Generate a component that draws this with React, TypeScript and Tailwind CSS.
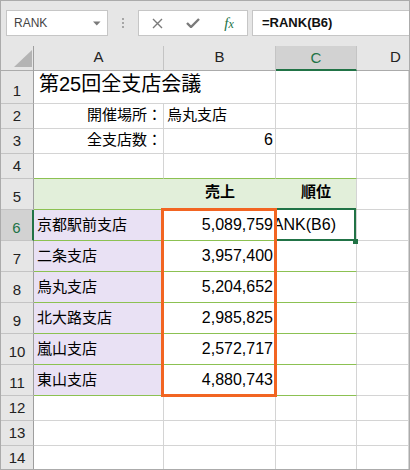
import React from "react";

const F = "font-['Liberation_Sans','Noto_Sans_CJK_JP',sans-serif]";

const G = "border-r border-b border-[#d4d4d4]";
const RH =
  "flex items-end justify-center pb-[2px] text-[15px] leading-[20px] text-[#222] bg-[#e6e6e6] border-r border-b border-r-[#9e9e9e] border-b-[#c4c4c4]";
const RH_SEL =
  "flex items-end justify-center pb-[2px] text-[15px] leading-[20px] text-[#217346] bg-[#d2d2d2] border-r-2 border-b border-r-[#217346] border-b-[#c4c4c4]";
const CH =
  "flex items-center justify-center pb-[1px] text-[15px] text-[#222] border-r border-b border-r-[#c4c4c4] border-b-[#ababab]";

const branches: [string, string][] = [
  ["京都駅前支店", "5,089,759"],
  ["二条支店", "3,957,400"],
  ["烏丸支店", "5,204,652"],
  ["北大路支店", "2,985,825"],
  ["嵐山支店", "2,572,717"],
  ["東山支店", "4,880,743"],
];

export default function App() {
  return (
    <div
      className={`relative h-[470px] w-[410px] overflow-hidden border border-[#ababab] bg-[#e6e6e6] text-black ${F}`}
    >
      {/* formula bar */}
      <div className="flex h-[45px] items-start pl-[5px] pt-[9px]">
        <div className="flex h-[26px] w-[102px] items-center justify-between border border-[#c6c6c6] bg-white pl-[7px] pr-[6px]">
          <span className="text-[12px] text-[#444]">RANK</span>
          <svg width="8" height="5" viewBox="0 0 8 5">
            <path d="M0 0.5h7.5L3.75 4.5z" fill="#7a7a7a" />
          </svg>
        </div>
        <div className="ml-[14px] mr-[14px] flex h-[26px] flex-col items-center justify-center gap-[2px]">
          <span className="h-[2px] w-[2px] bg-[#a6a6a6]" />
          <span className="h-[2px] w-[2px] bg-[#a6a6a6]" />
          <span className="h-[2px] w-[2px] bg-[#a6a6a6]" />
        </div>
        <div className="flex h-[26px] w-[110px] items-center border border-[#c6c6c6] bg-white">
          <div className="flex w-[36px] justify-center">
            <svg width="11" height="11" viewBox="0 0 11 11">
              <path d="M1 1L10 10M10 1L1 10" stroke="#7a7a7a" strokeWidth="1.4" />
            </svg>
          </div>
          <div className="flex w-[36px] justify-center">
            <svg width="14" height="10" viewBox="0 0 14 10">
              <path d="M1 5L5 9L13 1" stroke="#7a7a7a" strokeWidth="2.4" fill="none" />
            </svg>
          </div>
          <div className="flex w-[36px] justify-center">
            <span className="font-['Liberation_Serif',serif] text-[15px] italic leading-none text-[#217346]">
              f<span className="text-[12px]">x</span>
            </span>
          </div>
        </div>
        <div className="ml-[4px] flex h-[26px] flex-1 items-center border-y border-l border-[#c6c6c6] bg-white pl-[9px]">
          <span className="text-[13px] font-bold text-[#111]">=RANK(B6)</span>
        </div>
      </div>

      {/* sheet */}
      <div className="grid grid-cols-[33px_130px_112px_81px_52px] grid-rows-[25px_33px_25px_25px_25px_31px_31px_31px_31px_31px_31px_31px_25px_25px_25px] bg-white">
        {/* header row */}
        <div className="relative border-r border-b border-r-[#9e9e9e] border-b-[#ababab] bg-[#e6e6e6]">
          <svg className="absolute left-0 top-0" width="32" height="24" viewBox="0 0 32 24">
            <path d="M13 21H31V4Z" fill="#b4b4b4" />
          </svg>
        </div>
        <div className={`${CH} bg-[#e6e6e6]`}>A</div>
        <div className={`${CH} bg-[#e6e6e6]`}>B</div>
        <div className="flex items-center justify-center border-r border-b-2 border-r-[#c4c4c4] border-b-[#217346] bg-[#d2d2d2] pt-[1px] text-[15px] text-[#217346]">
          C
        </div>
        <div className="flex items-center border-b border-b-[#ababab] bg-[#e6e6e6] pb-[1px] pl-[33px] text-[15px] text-[#222]">
          D
        </div>

        {/* row 1 */}
        <div className={RH}>1</div>
        <div className="relative z-10 flex items-end whitespace-nowrap border-b border-[#d4d4d4] pb-[6px] pl-[5px] text-[20px] leading-[26px]">
          第25回全支店会議
        </div>
        <div className={G} />
        <div className={G} />
        <div className={G} />

        {/* row 2 */}
        <div className={RH}>2</div>
        <div className={`${G} flex items-end justify-end pb-[3px] pr-[1px] text-[15px] leading-[20px]`}>
          開催場所：
        </div>
        <div className={`${G} flex items-end pb-[3px] pl-[3px] text-[15px] leading-[20px]`}>烏丸支店</div>
        <div className={G} />
        <div className={G} />

        {/* row 3 */}
        <div className={RH}>3</div>
        <div className={`${G} flex items-end justify-end pb-[3px] pr-[1px] text-[15px] leading-[20px]`}>
          全支店数：
        </div>
        <div className={`${G} flex items-end justify-end pb-[3px] pr-[2px] text-[16px] leading-[20px]`}>6</div>
        <div className={G} />
        <div className={G} />

        {/* row 4 */}
        <div className={RH}>4</div>
        <div className="border-r border-b border-r-[#d4d4d4] border-b-[#8cc152]" />
        <div className="border-r border-b border-r-[#d4d4d4] border-b-[#8cc152]" />
        <div className="border-r border-b border-r-[#d4d4d4] border-b-[#8cc152]" />
        <div className={G} />

        {/* row 5 */}
        <div className={RH}>5</div>
        <div className="border-b border-b-[#8cc152] bg-[#e2efda]" />
        <div className="flex items-end justify-center border-b border-b-[#8cc152] bg-[#e2efda] pb-[7px] text-[15px] font-bold leading-[20px]">
          売上
        </div>
        <div className="flex items-end justify-center border-r border-b border-r-[#d4d4d4] border-b-[#8cc152] bg-[#e2efda] pb-[7px] text-[15px] font-bold leading-[20px]">
          順位
        </div>
        <div className={G} />

        {/* rows 6-11 */}
        {branches.map(([name, sales], i) => (
          <React.Fragment key={name}>
            <div className={i === 0 ? RH_SEL : RH}>{i + 6}</div>
            <div className="flex items-end border-r border-b border-r-[#d4d4d4] border-b-[#8cc152] bg-[#e9e1f4] pb-[5px] pl-[3px] text-[15px] leading-[20px]">
              {name}
            </div>
            <div className="flex items-end justify-end border-r border-b border-r-[#d4d4d4] border-b-[#8cc152] pb-[5px] pr-[2px] text-[16px] leading-[20px]">
              {sales}
            </div>
            {i === 0 ? (
              <div className="flex items-end justify-end overflow-hidden whitespace-nowrap border-r border-b border-r-[#d4d4d4] border-b-[#8cc152] pb-[5px] pr-[20px] text-[16px] leading-[20px]">
                <span className="shrink-0">=RANK(B6)</span>
              </div>
            ) : (
              <div className="border-r border-b border-r-[#d4d4d4] border-b-[#8cc152]" />
            )}
            <div className={G} />
          </React.Fragment>
        ))}

        {/* rows 12-14 */}
        {[12, 13, 14].map((n) => (
          <React.Fragment key={n}>
            <div className={RH}>{n}</div>
            <div className={G} />
            <div className={G} />
            <div className={G} />
            <div className={G} />
          </React.Fragment>
        ))}
      </div>

      {/* active cell C6 */}
      <div className="absolute left-[273px] top-[207px] h-[33px] w-[82px] border-2 border-[#217346]" />
      <div className="absolute left-[352px] top-[238px] h-[5px] w-[5px] bg-[#217346]" />
      {/* orange highlight B6:B11 */}
      <div className="absolute left-[160px] top-[207px] h-[189px] w-[116px] border-[3px] border-[#f26522]" />
    </div>
  );
}
